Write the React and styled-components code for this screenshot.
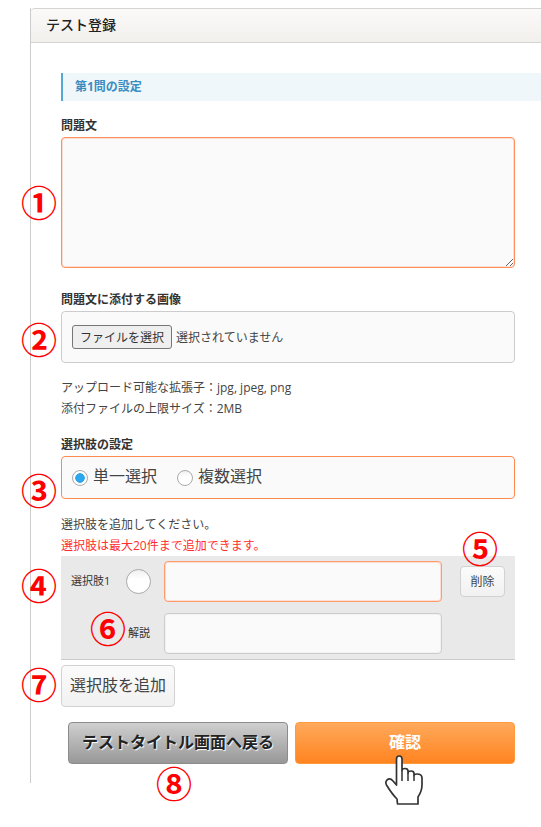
import React from 'react';
import styled, { createGlobalStyle } from 'styled-components';

const GlobalStyle = createGlobalStyle`
  html, body {
    margin: 0;
    padding: 0;
    background: #fff;
  }
  body {
    font-family: "Open Sans", "Noto Sans CJK JP", sans-serif;
    color: #333;
  }
  * {
    box-sizing: border-box;
  }
`;

const Page = styled.div`
  position: relative;
  width: 541px;
  height: 827px;
  padding: 8px 0 0 30px;
  overflow: hidden;
`;

const Panel = styled.section`
  width: 511px;
  height: 775px;
  border-left: 1px solid #ccc;
`;

const PanelHeader = styled.h1`
  display: flex;
  align-items: center;
  height: 35px;
  margin: 0;
  padding: 0 0 3px 15px;
  border-top: 1px solid #d4d4d4;
  border-bottom: 1px solid #d4d4d4;
  border-top-left-radius: 4px;
  background: linear-gradient(#fbfaf9, #f2f0ed);
  color: #222;
  font-size: 14px;
  font-weight: 500;
`;

const PanelBody = styled.div`
  display: flex;
  flex-direction: column;
  padding: 30px 26px 0 30px;
`;

const SectionTitle = styled.h2`
  display: flex;
  align-items: center;
  height: 28px;
  margin: 0 -26px 0 0;
  padding: 0 0 2px 12px;
  border-left: 2px solid #56a8d4;
  background: #f0f7fb;
  color: #3a8dc1;
  font-size: 12px;
  font-weight: 700;
`;

const Label = styled.label`
  display: block;
  height: 20px;
  margin-top: ${(p) => p.$top}px;
  line-height: 17px;
  color: #333;
  font-size: 12px;
  font-weight: 700;
`;

const TextArea = styled.textarea`
  display: block;
  width: 454px;
  height: 131px;
  border: 1px solid #ff8f5e;
  border-radius: 4px;
  background: #fafafa;
  box-shadow: inset 0 0 0 1px rgba(255, 143, 94, 0.25);
  outline: none;
`;

const FileBox = styled.div`
  display: flex;
  align-items: center;
  gap: 4px;
  height: 52px;
  padding-left: 10px;
  border: 1px solid #ccc;
  border-radius: 4px;
  background: #fafafa;
  font-size: 12px;
  color: #444;
`;

const FileButton = styled.button`
  width: 100px;
  height: 24px;
  padding: 0;
  border: 1px solid #767676;
  border-radius: 3px;
  background: #efefef;
  color: #333;
  font-family: inherit;
  font-size: 12px;
`;

const HelpText = styled.p`
  margin: ${(p) => p.$top}px 0 0;
  color: ${(p) => p.$color || '#444'};
  font-size: 12px;
  line-height: 21px;
`;

const RadioBox = styled.div`
  display: flex;
  align-items: center;
  gap: 20px;
  height: 43px;
  padding-left: 10px;
  border: 1px solid #ff8a50;
  border-radius: 4px;
  background: #fafafa;
`;

const RadioOption = styled.span`
  display: flex;
  align-items: center;
  gap: 5px;
  color: #444;
  font-size: 16px;
`;

const RadioText = styled.span`
  padding-bottom: 5px;
`;

const RadioMark = styled.span`
  display: block;
  flex: none;
  width: ${(p) => p.$size}px;
  height: ${(p) => p.$size}px;
  border: 1.5px solid #aaa;
  border-radius: 50%;
  background: ${(p) =>
    p.$checked
      ? 'radial-gradient(circle, #2ea7ee 0 4.5px, #fff 5px)'
      : 'linear-gradient(#f0f0f0, #fff 40%)'};
`;

const ChoiceBox = styled.div`
  display: grid;
  grid-template-columns: 93px 278px 1fr;
  grid-auto-rows: 41px;
  row-gap: 11px;
  height: 104px;
  padding: 5px 10px 0;
  border-bottom: 1px solid #ccc;
  background: #e9e9e9;
`;

const ChoiceLabel = styled.div`
  display: flex;
  align-items: center;
  justify-content: ${(p) => (p.$end ? 'flex-end' : 'space-between')};
  padding-right: ${(p) => (p.$end ? 14 : 13)}px;
  color: #333;
  font-size: 11px;
`;

const ChoiceText = styled.span`
  padding-bottom: 3px;
`;

const ChoiceInput = styled.input`
  width: 278px;
  height: 41px;
  border: 1px solid ${(p) => (p.$accent ? '#ff9a6b' : '#ccc')};
  border-radius: 4px;
  background: #fafafa;
  box-shadow: ${(p) => (p.$accent ? 'inset 0 0 0 1px rgba(255, 143, 94, 0.25)' : 'inset 0 0 0 1px rgba(0, 0, 0, 0.03)')};
  outline: none;
`;

const GhostButton = styled.button`
  width: ${(p) => p.$width}px;
  height: ${(p) => p.$height}px;
  padding: 0 0 ${(p) => (p.$size > 14 ? 4 : 1)}px;
  border: 1px solid #d2d2d2;
  border-radius: 4px;
  background: linear-gradient(#fbfbfb, #f1f1f1);
  color: #444;
  font-family: inherit;
  font-size: ${(p) => p.$size}px;
`;

const DeleteCell = styled.div`
  display: flex;
  justify-content: flex-end;
  padding-top: 5px;
`;

const AddRow = styled.div`
  margin-top: 5px;
`;

const Actions = styled.div`
  display: flex;
  justify-content: flex-end;
  gap: 7px;
  margin-top: 15px;
`;

const ActionButton = styled.button`
  width: 220px;
  height: 42px;
  padding: 0 0 5px;
  border-radius: 4px;
  font-family: inherit;
  font-size: 16px;
  font-weight: 700;
`;

const BackButton = styled(ActionButton)`
  border: 1px solid #8c8c8c;
  background: linear-gradient(#cfcfcf, #989898);
  color: #222;
  text-shadow: 1px 1px 1px #fff;
`;

const ConfirmButton = styled(ActionButton)`
  border: 1px solid #ff9a3c;
  background: linear-gradient(#ffa95c, #ff8420);
  color: #fff;
`;

const Marker = styled.span`
  position: absolute;
  left: ${(p) => p.$x}px;
  top: ${(p) => p.$y}px;
  width: 34px;
  height: 34px;
  color: #f00;
  font-family: "Noto Sans CJK JP", sans-serif;
  font-size: 36px;
  font-weight: 700;
  line-height: 34px;
  text-align: center;
`;

const HandIcon = styled.svg`
  position: absolute;
  left: 384px;
  top: 754px;
  width: 40px;
  height: 52px;
`;

const markers = [
  ['①', 21, 184],
  ['②', 21, 321],
  ['③', 21, 472],
  ['④', 21, 567],
  ['⑤', 462, 530],
  ['⑥', 90, 610],
  ['⑦', 21, 666],
  ['⑧', 156, 765],
];

function App() {
  return (
    <Page>
      <GlobalStyle />
      <Panel>
        <PanelHeader>テスト登録</PanelHeader>
        <PanelBody>
          <SectionTitle>第1問の設定</SectionTitle>
          <Label $top={16}>問題文</Label>
          <TextArea />
          <Label $top={23}>問題文に添付する画像</Label>
          <FileBox>
            <FileButton type="button">ファイルを選択</FileButton>
            選択されていません
          </FileBox>
          <HelpText $top={14}>アップロード可能な拡張子：jpg, jpeg, png</HelpText>
          <HelpText $top={0}>添付ファイルの上限サイズ：2MB</HelpText>
          <Label $top={17}>選択肢の設定</Label>
          <RadioBox>
            <RadioOption>
              <RadioMark $size={16} $checked />
              <RadioText>単一選択</RadioText>
            </RadioOption>
            <RadioOption>
              <RadioMark $size={16} />
              <RadioText>複数選択</RadioText>
            </RadioOption>
          </RadioBox>
          <HelpText $top={15}>選択肢を追加してください。</HelpText>
          <HelpText $top={0} $color="#ff2d2d">
            選択肢は最大20件まで追加できます。
          </HelpText>
          <ChoiceBox>
            <ChoiceLabel>
              <ChoiceText>選択肢1</ChoiceText>
              <RadioMark $size={25} />
            </ChoiceLabel>
            <ChoiceInput $accent />
            <DeleteCell>
              <GhostButton type="button" $width={45} $height={31} $size={12}>
                削除
              </GhostButton>
            </DeleteCell>
            <ChoiceLabel $end>
              <ChoiceText>解説</ChoiceText>
            </ChoiceLabel>
            <ChoiceInput />
          </ChoiceBox>
          <AddRow>
            <GhostButton type="button" $width={114} $height={42} $size={16}>
              選択肢を追加
            </GhostButton>
          </AddRow>
          <Actions>
            <BackButton type="button">テストタイトル画面へ戻る</BackButton>
            <ConfirmButton type="button">確認</ConfirmButton>
          </Actions>
        </PanelBody>
      </Panel>
      {markers.map(([glyph, x, y]) => (
        <Marker key={glyph} $x={x} $y={y}>
          {glyph}
        </Marker>
      ))}
      <HandIcon viewBox="0 0 40 52">
        <path
          d="M12.5 5Q12.5 2 15.2 2Q18 2 18 5L18 16.5Q18 14.5 21 14.5Q24 14.5 24 17L24 19Q24 17 27 17Q30 17 30 19.5L30 21.5Q30 20 33 20Q38 20 38 24L38 31Q38 37 34 43L34 50L13.5 50L13 45Q8 40 2.5 31Q1 28 3 26Q6 23.5 9 27L12.5 31Z"
          fill="#fff"
          stroke="#333"
          strokeWidth="1.7"
          strokeLinejoin="round"
        />
        <path d="M18 16.5V27M24 19V27M30 21.5V27" fill="none" stroke="#333" strokeWidth="1.5" />
      </HandIcon>
    </Page>
  );
}

export default App;
